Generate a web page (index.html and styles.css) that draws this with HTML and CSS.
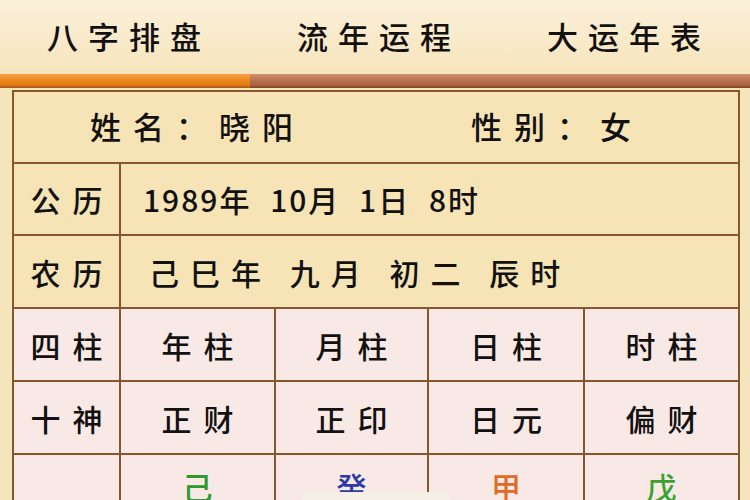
FILE: index.html
```html
<!DOCTYPE html>
<html lang="zh">
<head>
<meta charset="utf-8">
<link rel="stylesheet" href="styles.css">
</head>
<body>
<div class="page">
  <nav class="tabs">
    <div class="tab">八字排盘</div>
    <div class="tab">流年运程</div>
    <div class="tab">大运年表</div>
  </nav>
  <div class="bar"><div class="bar-active"></div><div class="bar-rest"></div></div>
  <div class="wrap">
    <table class="chart">
      <colgroup>
        <col class="c0"><col class="c1"><col class="c2"><col class="c3"><col class="c4">
      </colgroup>
      <tr class="y r1">
        <td colspan="5"><div class="namerow"><span class="name">姓名：晓阳</span><span class="sex">性别：女</span></div></td>
      </tr>
      <tr class="y r2">
        <td class="head">公历</td>
        <td colspan="4" class="info solar">1989年 10月 1日 8时</td>
      </tr>
      <tr class="y r3">
        <td class="head">农历</td>
        <td colspan="4" class="info lunar">己巳年 九月 初二 辰时</td>
      </tr>
      <tr class="p r4">
        <td class="head">四柱</td><td>年柱</td><td>月柱</td><td>日柱</td><td>时柱</td>
      </tr>
      <tr class="p r5">
        <td class="head">十神</td><td>正财</td><td>正印</td><td>日元</td><td>偏财</td>
      </tr>
      <tr class="p r6">
        <td class="head"></td>
        <td class="g1">己</td><td class="b1">癸</td><td class="o1">甲</td><td class="g2">戊</td>
      </tr>
    </table>
  </div>
  <div class="pill"></div>
</div>
</body>
</html>
```

FILE: styles.css
```css
html, body {
  margin: 0;
  padding: 0;
}
body {
  width: 750px;
  height: 500px;
  overflow: hidden;
  background: #f5e5bd;
  font-family: "Noto Sans CJK SC", "Noto Sans", sans-serif;
  font-weight: 500;
  color: #121110;
}
.page {
  position: relative;
  width: 750px;
  height: 500px;
  overflow: hidden;
}
.tabs {
  height: 74px;
  display: flex;
  background: linear-gradient(#fbf0da, #f6e4bc);
}
.tab {
  flex: 1;
  display: flex;
  align-items: center;
  justify-content: center;
  font-size: 31px;
  letter-spacing: 10px;
  padding-left: 8px;
  padding-bottom: 4px;
}
.bar {
  display: flex;
  height: 14px;
}
.bar-active {
  width: 250px;
  background: linear-gradient(#f6a14a, #ee8a1f 40%, #e27d15 75%, #a9561c);
}
.bar-rest {
  flex: 1;
  background: linear-gradient(#c9906e, #b87252 45%, #a8613f 80%, #7e4425);
}
.wrap {
  padding: 2px 12px 0 12px;
}
.chart {
  width: 726px;
  border-collapse: collapse;
  border: 2px solid #6b4722;
  table-layout: fixed;
}
.c0 { width: 107px; }
.c1 { width: 155px; }
.c2 { width: 153px; }
.c3 { width: 156px; }
.c4 { width: 155px; }
.chart td {
  border: 2px solid #86562c;
  text-align: center;
  font-size: 30px;
  letter-spacing: 12px;
  padding: 0 0 0 12px;
  height: 71px;
}
.y td { background: #f6e4b6; }
.p td { background: #f9e9e6; }
.r1 td, .r2 td { height: 70px; }
.namerow {
  display: flex;
  font-size: 31px;
  letter-spacing: 12px;
  padding-bottom: 4px;
}
.name { margin-left: 64px; }
.sex { margin-left: 166px; }
.chart td.info {
  text-align: left;
  letter-spacing: 2px;
  word-spacing: 10px;
}
.chart td.solar { padding-left: 22px; }
.chart td.lunar { padding-left: 28px; letter-spacing: 11px; word-spacing: 0; }
.chart td.g1 { color: #2c9a2c; }
.chart td.b1 { color: #2a3aa6; }
.chart td.o1 { color: #e26a24; }
.chart td.g2 { color: #3aa132; }
.r6 td { vertical-align: top; padding-top: 9px; }
.pill {
  position: absolute;
  left: 302px;
  top: 492px;
  width: 148px;
  height: 20px;
  border-radius: 4px;
  background: #f4f0e6;
}
```
